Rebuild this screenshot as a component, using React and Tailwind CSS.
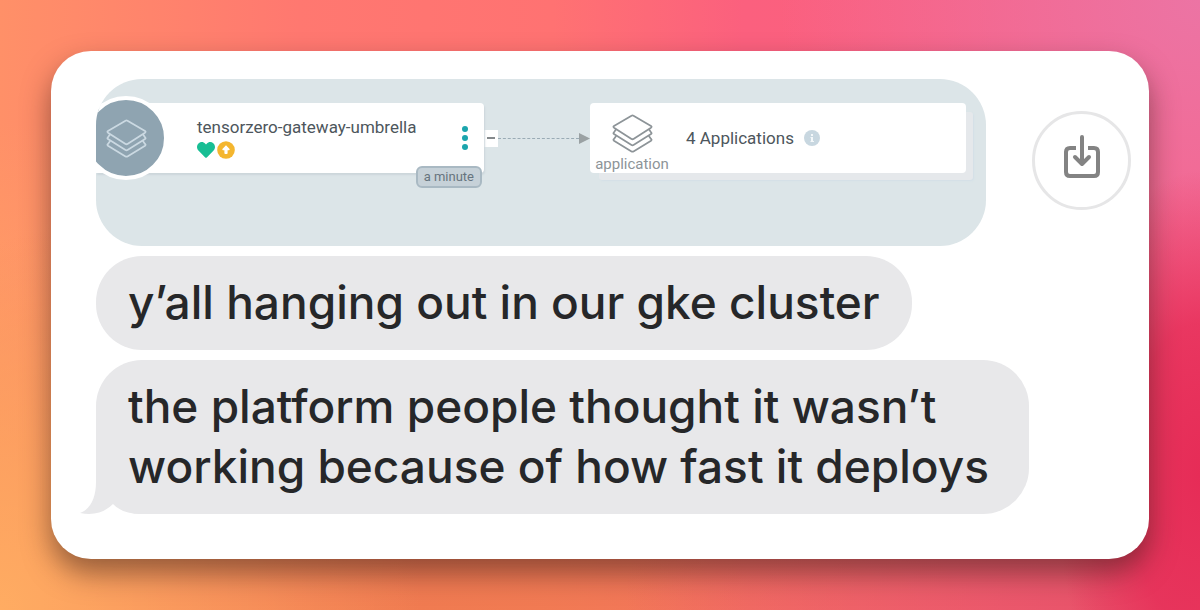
import React from "react";

function LayersIcon({ className, strokeWidth = 1.5 }) {
  return (
    <svg viewBox="0 0 42 40" className={className} fill="none" stroke="currentColor" strokeWidth={strokeWidth} strokeLinejoin="round" strokeLinecap="round" aria-hidden="true">
      <path d="M20 1.8Q21 1.2 22 1.8L40 12.3Q41.2 13.1 40 14L22 25.6Q21 26.2 20 25.6L2 14Q.8 13.1 2 12.3Z" />
      <path d="M4 16 2 18.8Q.8 19.7 2 20.6L20 31.9Q21 32.5 22 31.9L40 20.6Q41.2 19.7 40 18.8L38 16" />
      <path d="M4 22.8 2 25.6Q.8 26.5 2 27.4L20 38.4Q21 39 22 38.4L40 27.4Q41.2 26.5 40 25.6L38 22.8" />
    </svg>
  );
}

function RootNode() {
  return (
    <div className="relative flex h-[70px] w-[388px] shrink-0 items-center rounded-r-[4px] bg-white shadow-[1px_2px_2px_#ccd6db]">
      <div className="-ml-3 flex size-[84px] shrink-0 items-center justify-center rounded-full border-4 border-white bg-[#8fa4b1]">
        <LayersIcon className="h-[39px] w-[41px] text-[#cbd9e2]" strokeWidth={1.8} />
      </div>
      <div className="ml-[29px] flex flex-1 flex-col gap-1">
        <span className="text-[17px] leading-5 text-[#4d565c]">tensorzero-gateway-umbrella</span>
        <div className="flex items-center gap-[2px]">
          <svg viewBox="0 0 512 512" className="size-[18px]" fill="#18be94" aria-hidden="true">
            <path d="M462 62c-55-47-136-38-186 14l-20 20-20-20C186 24 105 15 50 62c-63 54-66 150-10 209l193 199c13 13 33 13 46 0l193-199c56-59 53-155-10-209z" />
          </svg>
          <svg viewBox="0 0 18 18" className="size-[18px]" aria-hidden="true">
            <circle cx="9" cy="9" r="8.8" fill="#f4b62f" />
            <path d="M9 4.2 12.6 8Q13 9.3 11.8 9.3H10.6V12.4Q9 13.6 7.4 12.4V9.3H6.2Q5 9.3 5.4 8Z" fill="#fff" />
          </svg>
        </div>
      </div>
      <button type="button" aria-label="Node actions" className="mr-4 flex flex-col gap-[3px]">
        <span className="size-[6px] rounded-full bg-[#1ba5ad]" />
        <span className="size-[6px] rounded-full bg-[#1ba5ad]" />
        <span className="size-[6px] rounded-full bg-[#1ba5ad]" />
      </button>
      <span className="absolute right-[2px] -bottom-[15px] flex h-[22px] items-center rounded-[6px] border-2 border-[#a9b9c3] bg-[#c6d1d8] px-[6px] text-[13px] text-[#66747e]">
        a minute
      </span>
    </div>
  );
}

function Connector() {
  return (
    <div className="flex w-[106px] shrink-0 items-center">
      <button type="button" aria-label="Collapse" className="flex h-[17px] w-[14px] items-center justify-center bg-white">
        <span className="h-[2px] w-2 bg-[#84898c]" />
      </button>
      <span className="flex-1 border-t border-dashed border-[#9aabb5]" />
      <svg viewBox="0 0 11 11" className="size-[11px]" fill="#9aa1a3" aria-hidden="true">
        <path d="M0 0 11 5.5 0 11Z" />
      </svg>
    </div>
  );
}

function GroupNode() {
  return (
    <div className="flex h-[70px] w-[376px] shrink-0 items-center rounded-[4px] bg-white shadow-[8px_8px_0_-1px_#e5e8eb,9px_9px_2px_-1px_#d3dfe7]">
      <div className="flex w-[84px] shrink-0 flex-col items-center pt-3">
        <LayersIcon className="h-[39px] w-[41px] text-[#8d9498]" strokeWidth={1.8} />
        <span className="text-[15px] leading-[22px] text-[#8d9498]">application</span>
      </div>
      <span className="ml-3 text-[17px] leading-5 text-[#4d565c]">4 Applications</span>
      <svg viewBox="0 0 16 16" className="ml-[10px] size-4" aria-hidden="true">
        <circle cx="8" cy="8" r="8" fill="#c8d7e0" />
        <path d="M7 4h2v2H7zM6.5 7H9v4h1v1H6.5v-1H7V8h-.5z" fill="#f4f8fa" />
      </svg>
    </div>
  );
}

export default function App() {
  return (
    <main className="min-h-screen bg-[radial-gradient(ellipse_12%_50%_at_100%_78%,#e62c57_0%,#e62c57cc_50%,#e62c5700_100%),radial-gradient(ellipse_40%_50%_at_92%_100%,#e8536a_0%,#e8536a00_100%),radial-gradient(ellipse_35%_65%_at_100%_0%,#ec74a4_0%,#ec74a400_100%),radial-gradient(ellipse_35%_80%_at_0%_100%,#ffac62_0%,#ffac6200_100%),radial-gradient(ellipse_75%_80%_at_35%_110%,#ee7c4c_0%,#ee7c4c00_100%),linear-gradient(90deg,#ff9068_0%,#ff7870_25%,#ff7272_46%,#fb607e_62%,#f86085_100%)] px-[51px] pt-[51px] pb-[50px] font-['Inter',sans-serif]">
      <section className="flex items-start justify-between rounded-[40px] bg-white pt-7 pr-[18px] pb-[45px] pl-[45px] shadow-[0_14px_28px_rgba(50,25,20,0.5)]">
        <div className="flex flex-col items-start gap-[10px]">
          <figure className="h-[167px] w-[890px] overflow-hidden rounded-[46px] bg-[#dce5e8] pt-6 font-['Roboto',sans-serif]">
            <div className="flex items-center">
              <RootNode />
              <Connector />
              <GroupNode />
            </div>
          </figure>
          <p className="rounded-[46px] bg-[#e8e8ea] px-8 pt-4 pb-[18px] text-[46px] leading-[60px] font-medium text-[#262729]">
            y’all hanging out in our gke cluster
          </p>
          <div className="relative rounded-[46px] bg-[#e8e8ea] pt-4 pr-10 pb-[18px] pl-8">
            <svg viewBox="0 0 62 64" className="absolute bottom-0 -left-4 h-16 w-[62px]" fill="#e8e8ea" aria-hidden="true">
              <path d="M16 0V32C16 47 11 59 0 63Q20 67 33 54Q42 64 62 64V0Z" />
            </svg>
            <p className="relative text-[46px] leading-[60px] font-medium whitespace-nowrap text-[#262729]">
              the platform people thought it wasn’t
              <br />
              working because of how fast it deploys
            </p>
          </div>
        </div>
        <button type="button" aria-label="Save" className="mt-8 -ml-4 flex size-[99px] shrink-0 items-center justify-center rounded-full border-[3px] border-[#e6e6e7] bg-white">
          <svg viewBox="0 0 38 46" className="mb-2 h-[46px] w-[38px]" fill="none" stroke="#838383" strokeWidth="4" aria-hidden="true">
            <path d="M13 14H7Q3 14 3 18V38Q3 42 7 42H31Q35 42 35 38V18Q35 14 31 14H25" />
            <path d="M19 3V29M12 23 19 30 26 23" strokeLinecap="round" strokeLinejoin="round" />
          </svg>
        </button>
      </section>
    </main>
  );
}
